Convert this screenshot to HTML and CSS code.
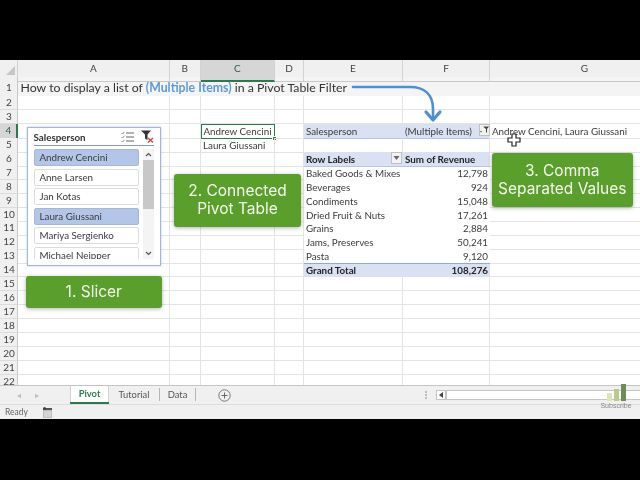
FILE: index.html
```html
<!DOCTYPE html>
<html lang="en">
<head>
<meta charset="utf-8">
<title>Pivot Table Filter</title>
<link rel="stylesheet" href="styles.css">
</head>
<body>
<main class="frame">
  <section class="sheet">
    <div class="row head">
      <div class="corner"><svg width="18" height="17" viewBox="0 0 18 17"><path d="M15 6v9H6z" fill="#c6c6c6"/></svg></div>
      <div class="ch">A</div><div class="ch">B</div><div class="ch on">C</div><div class="ch">D</div><div class="ch">E</div><div class="ch">F</div><div class="ch">G</div>
    </div>
    <div class="row title"><div class="rh">1</div><div class="tt">How to display a list of <b>(Multiple Items)</b> in a Pivot Table Filter</div></div>
    <div class="row"><div class="rh">2</div><div class="c"></div><div class="c"></div><div class="c"></div><div class="c"></div><div class="c"></div><div class="c"></div><div class="c"></div></div>
    <div class="row"><div class="rh">3</div><div class="c"></div><div class="c"></div><div class="c"></div><div class="c"></div><div class="c"></div><div class="c"></div><div class="c"></div></div>
    <div class="row"><div class="rh on">4</div><div class="c"></div><div class="c"></div><div class="c sel">Andrew Cencini<i class="handle"></i></div><div class="c"></div><div class="c band">Salesperson</div><div class="c band filt">(Multiple Items)<span class="fbtn"><svg width="9" height="7" viewBox="0 0 9 7"><path d="M3 0.5h6L7 3v3.5H6V3z" fill="#444"/><path d="M0 5h2L1 6.5z" fill="#444"/></svg></span></div><div class="c gtext">Andrew Cencini, Laura Giussani</div></div>
    <div class="row"><div class="rh">5</div><div class="c"></div><div class="c"></div><div class="c">Laura Giussani</div><div class="c"></div><div class="c"></div><div class="c"></div><div class="c"></div></div>
    <div class="row"><div class="rh">6</div><div class="c"></div><div class="c"></div><div class="c"></div><div class="c"></div><div class="c band bold lab">Row Labels<span class="drop"><svg width="7" height="4" viewBox="0 0 7 4"><path d="M0.5 0h6L3.5 4z" fill="#666"/></svg></span></div><div class="c band bold">Sum of Revenue</div><div class="c"></div></div>
    <div class="row"><div class="rh">7</div><div class="c"></div><div class="c"></div><div class="c"></div><div class="c"></div><div class="c pv">Baked Goods &amp; Mixes</div><div class="c pv num">12,798</div><div class="c"></div></div>
    <div class="row"><div class="rh">8</div><div class="c"></div><div class="c"></div><div class="c"></div><div class="c"></div><div class="c pv">Beverages</div><div class="c pv num">924</div><div class="c"></div></div>
    <div class="row"><div class="rh">9</div><div class="c"></div><div class="c"></div><div class="c"></div><div class="c"></div><div class="c pv">Condiments</div><div class="c pv num">15,048</div><div class="c"></div></div>
    <div class="row"><div class="rh">10</div><div class="c"></div><div class="c"></div><div class="c"></div><div class="c"></div><div class="c pv">Dried Fruit &amp; Nuts</div><div class="c pv num">17,261</div><div class="c"></div></div>
    <div class="row"><div class="rh">11</div><div class="c"></div><div class="c"></div><div class="c"></div><div class="c"></div><div class="c pv">Grains</div><div class="c pv num">2,884</div><div class="c"></div></div>
    <div class="row"><div class="rh">12</div><div class="c"></div><div class="c"></div><div class="c"></div><div class="c"></div><div class="c pv">Jams, Preserves</div><div class="c pv num">50,241</div><div class="c"></div></div>
    <div class="row"><div class="rh">13</div><div class="c"></div><div class="c"></div><div class="c"></div><div class="c"></div><div class="c pv">Pasta</div><div class="c pv num">9,120</div><div class="c"></div></div>
    <div class="row"><div class="rh">14</div><div class="c"></div><div class="c"></div><div class="c"></div><div class="c"></div><div class="c band bold total">Grand Total</div><div class="c band bold num total">108,276</div><div class="c"></div></div>
    <div class="row"><div class="rh">15</div><div class="c"></div><div class="c"></div><div class="c"></div><div class="c"></div><div class="c"></div><div class="c"></div><div class="c"></div></div>
    <div class="row"><div class="rh">16</div><div class="c"></div><div class="c"></div><div class="c"></div><div class="c"></div><div class="c"></div><div class="c"></div><div class="c"></div></div>
    <div class="row"><div class="rh">17</div><div class="c"></div><div class="c"></div><div class="c"></div><div class="c"></div><div class="c"></div><div class="c"></div><div class="c"></div></div>
    <div class="row"><div class="rh">18</div><div class="c"></div><div class="c"></div><div class="c"></div><div class="c"></div><div class="c"></div><div class="c"></div><div class="c"></div></div>
    <div class="row"><div class="rh">19</div><div class="c"></div><div class="c"></div><div class="c"></div><div class="c"></div><div class="c"></div><div class="c"></div><div class="c"></div></div>
    <div class="row"><div class="rh">20</div><div class="c"></div><div class="c"></div><div class="c"></div><div class="c"></div><div class="c"></div><div class="c"></div><div class="c"></div></div>
    <div class="row"><div class="rh">21</div><div class="c"></div><div class="c"></div><div class="c"></div><div class="c"></div><div class="c"></div><div class="c"></div><div class="c"></div></div>
    <div class="row"><div class="rh">22</div><div class="c"></div><div class="c"></div><div class="c"></div><div class="c"></div><div class="c"></div><div class="c"></div><div class="c"></div></div>

    <aside class="slicer">
      <header class="sl-head">
        <span class="sl-title">Salesperson</span>
        <svg class="sl-ico" width="13" height="12" viewBox="0 0 13 12"><path d="M5 2h8M5 6h8M5 10h8" stroke="#666" fill="none"/><path d="M0.5 2l1 1 2-2.2M0.5 6l1 1 2-2.2M0.5 10l1 1 2-2.2" stroke="#888" fill="none"/></svg>
        <svg class="sl-ico" width="13" height="13" viewBox="0 0 13 13"><path d="M0 0.5h10L6.5 4.5V10L4 8.5V4.5z" fill="#333"/><path d="M7 8l5 4.5M12 8l-5 4.5" stroke="#d8423a" stroke-width="1.4"/></svg>
      </header>
      <div class="sl-body">
        <div class="sl-items">
          <div class="item picked">Andrew Cencini</div>
          <div class="item">Anne Larsen</div>
          <div class="item">Jan Kotas</div>
          <div class="item picked">Laura Giussani</div>
          <div class="item">Mariya Sergienko</div>
          <div class="item">Michael Neipper</div>
        </div>
        <div class="sl-scroll">
          <svg width="11" height="11" viewBox="0 0 11 11"><path d="M3 7l2.5-2.5L8 7" stroke="#555" stroke-width="1.2" fill="none"/></svg>
          <div class="thumb"></div>
          <svg width="11" height="11" viewBox="0 0 11 11"><path d="M3 4l2.5 2.5L8 4" stroke="#555" stroke-width="1.2" fill="none"/></svg>
        </div>
      </div>
    </aside>

    <div class="note n1">1. Slicer</div>
    <div class="note n2">2. Connected<br>Pivot Table</div>
    <div class="note n3">3. Comma<br>Separated Values</div>

    <svg class="arrow" width="100" height="50" viewBox="0 0 100 50"><path d="M3 12H60C74 12 83 19 83 34V42" fill="none" stroke="#4c90d2" stroke-width="2.6" stroke-linecap="round"/><path d="M76 37L83 45L90 37" fill="none" stroke="#4c90d2" stroke-width="3.2" stroke-linecap="round" stroke-linejoin="round"/></svg>
    <svg class="cursor" width="14" height="14" viewBox="0 0 14 14"><path d="M5 1h4v4h4v4H9v4H5V9H1V5h4z" fill="#fff" stroke="#222" stroke-width="1.2"/></svg>
  </section>

  <nav class="tabbar">
    <div class="tabnav"><span>&#9666;</span><span>&#9656;</span></div>
    <div class="tab active">Pivot</div>
    <div class="tab w1">Tutorial</div>
    <div class="tab w2">Data</div>
    <svg class="plus" width="13" height="13" viewBox="0 0 13 13"><circle cx="6.5" cy="6.5" r="5.7" fill="none" stroke="#777"/><path d="M6.5 3.5v6M3.5 6.5h6" stroke="#666"/></svg>
    <div class="dots"></div>
    <div class="hscroll"><span class="hbtn"><svg width="5" height="6" viewBox="0 0 5 6"><path d="M4 0v6L0 3z" fill="#444"/></svg></span></div>
  </nav>

  <footer class="status">
    <span>Ready</span>
    <svg width="11" height="11" viewBox="0 0 11 11"><rect x="1" y="3" width="9" height="8" fill="#bbb"/><rect x="1" y="1" width="9" height="2" fill="#555"/><circle cx="2.5" cy="1.5" r="1.5" fill="#444"/><path d="M2 5h7M2 7h7M2 9h7" stroke="#eee"/></svg>
  </footer>

  <div class="sub">
    <div class="bars"><i class="b1"></i><i class="b2"></i><i class="b3"></i></div>
    <span>Subscribe</span>
  </div>
</main>
</body>
</html>
```

FILE: styles.css
```css
* { box-sizing: border-box; }
html, body { margin: 0; height: 100%; background: #000; overflow: hidden; }
body { padding: 60px 0; font-family: "Lato", "Liberation Sans", sans-serif; color: #3a3a3a; }

.frame {
  position: relative;
  width: 640px;
  height: 359px;
  background: #fff;
  display: flex;
  flex-direction: column;
  overflow: hidden;
  filter: blur(0.45px);
}

.sheet { position: relative; height: 325px; overflow: hidden; background: #fff; flex: none; }

.row {
  display: grid;
  grid-template-columns: 18px 152px 30.5px 74.5px 29px 99px 87px 190px;
  height: 13.95px;
  font-size: 9.8px;
  line-height: 14.5px;
}
.row.head { height: 17px; background: #f0f0f0; }
.row.title { height: 19px; grid-template-columns: 18px 622px; background: #f4f4f4; }

.corner { border-right: 1px solid #d0d0d0; border-bottom: 1px solid #c8c8c8; }
.ch {
  text-align: center;
  line-height: 16px;
  font-size: 10px;
  color: #444;
  border-right: 1px solid #d2d2d2;
  border-bottom: 1px solid #c8c8c8;
}
.ch.on { background: #d6d6d6; border-bottom: 2px solid #2b7a4b; color: #2f5f43; }

.rh {
  background: #f0f0f0;
  border-right: 1px solid #c8c8c8;
  border-bottom: 1px solid #dcdcdc;
  text-align: center;
  font-size: 10px;
  line-height: 13px;
  color: #444;
  padding-left: 1px;
}
.rh.on { background: #d6d6d6; border-right: 2px solid #2b7a4b; color: #2f5f43; }
.title .rh { line-height: 20px; }

.tt { font-size: 12.3px; line-height: 21px; padding-left: 2.5px; white-space: nowrap; color: #333; }
.tt b { color: #5b9bd5; font-weight: 700; }

.c {
  position: relative;
  min-width: 0;
  padding-left: 2.5px;
  white-space: nowrap;
  border-right: 1px solid #e4e4e4;
  border-bottom: 1px solid #e4e4e4;
}
.sel { border: 1px solid #2b7a4b; padding-left: 2px; line-height: 13px; }
.handle {
  position: absolute;
  right: -3px;
  bottom: -3px;
  width: 5px;
  height: 5px;
  background: #2b7a4b;
  border: 1px solid #fff;
}

.band { background: #d9e1f2; border-right: 0; border-bottom: 1px solid #b4c6e7; padding-left: 2px; }
.bold { font-weight: 700; color: #222; }
.filt { display: flex; justify-content: space-between; padding-right: 0; }
.fbtn, .drop {
  display: flex;
  align-items: center;
  justify-content: center;
  width: 11px;
  height: 12px;
  background: #f2f2f2;
  border: 1px solid #c0c0c0;
}
.lab { display: flex; justify-content: space-between; padding-right: 1px; }
.pv { border-right: 0; border-bottom: 0; padding-left: 2px; }
.num { text-align: right; padding-right: 2px; }
.total { border-top: 1px solid #8ea9db; border-bottom: 0; line-height: 13px; }
.gtext { padding-left: 2px; }

.slicer {
  position: absolute;
  left: 26.5px;
  top: 67px;
  width: 134px;
  height: 139px;
  padding: 0 6px 6px;
  background: #fff;
  border: 1px solid #a3b8d9;
  box-shadow: 0 0 2px rgba(120, 140, 180, .5);
  display: flex;
  flex-direction: column;
}
.sl-head {
  height: 18px;
  flex: none;
  display: flex;
  align-items: center;
  margin-bottom: 3px;
  border-bottom: 1px solid #7f9cc9;
  gap: 7px;
  font-size: 9.8px;
  font-weight: 700;
  color: #333;
}
.sl-title { flex: 1; }
.sl-ico { flex: none; }
.sl-body { flex: 1; min-height: 0; display: flex; gap: 4px; }
.sl-items { width: 106px; display: flex; flex-direction: column; gap: 2.5px; overflow: hidden; }
.item {
  flex: none;
  height: 17px;
  padding-left: 5px;
  border: 1px solid #dcdcdc;
  border-radius: 2px;
  font-size: 9.8px;
  line-height: 15px;
  color: #3a3a3a;
  background: #fff;
}
.item.picked { background: #b4c6e7; border-color: #a4b8dc; }
.sl-scroll { width: 11px; display: flex; flex-direction: column; background: #f4f4f4; }
.sl-scroll svg { flex: none; }
.thumb { flex: 1; margin-bottom: 39px; background: #c8c8c8; order: 0; }

.note {
  position: absolute;
  display: flex;
  align-items: center;
  justify-content: center;
  text-align: center;
  background: #5a9e2b;
  color: #f4f9ee;
  border-radius: 3px;
  box-shadow: 0 1px 4px rgba(0, 0, 0, .3);
  font-family: "Inter", "Liberation Sans", sans-serif;
  font-size: 15.5px;
  line-height: 18px;
}
.n1 { left: 25.5px; top: 216px; width: 136.5px; height: 32px; }
.n2 { left: 174px; top: 113.5px; width: 127px; height: 53.5px; }
.n3 { left: 491.5px; top: 92.5px; width: 141.5px; height: 54px; }

.arrow { position: absolute; left: 350px; top: 15px; }
.cursor { position: absolute; left: 507px; top: 73px; }

.tabbar {
  position: relative;
  flex: none;
  height: 20px;
  background: #f0f0f0;
  border-top: 1px solid #c4c4c4;
  border-bottom: 1px solid #dcdcdc;
  display: flex;
  align-items: stretch;
  font-size: 9.4px;
  color: #555;
}
.tabnav { width: 70px; display: flex; gap: 14px; padding-left: 17px; font-size: 8px; color: #bbb; line-height: 18px; }
.tab { line-height: 13px; text-align: center; border-right: 1px solid #b5b5b5; margin: 2px 0 3px; }
.tab.active {
  width: 39px;
  margin: 0;
  background: #fff;
  color: #2b7a4b;
  font-weight: 700;
  line-height: 16px;
  border-right: 0;
  border-bottom: 2px solid #2b7a4b;
  box-shadow: inset 1px 0 #d0d0d0, inset -1px 0 #d0d0d0;
}
.w1 { width: 51px; }
.w2 { width: 36px; }
.plus { margin: 3px 0 0 22px; flex: none; }
.dots { width: 2px; margin: 5px 0 5px 194px; border-left: 2px dotted #bbb; }
.hscroll { flex: 1; margin: 4px 0 4px 9px; background: #fff; border: 1px solid #c4c4c4; border-right: 0; }
.hbtn { display: flex; align-items: center; justify-content: center; width: 10px; height: 100%; border-right: 2px solid #c4c4c4; }

.status {
  flex: none;
  height: 14px;
  background: #f0f0f0;
  display: flex;
  align-items: center;
  gap: 14px;
  padding-left: 5px;
  font-size: 8.5px;
  color: #666;
}

.sub {
  position: absolute;
  left: 601px;
  top: 324px;
  width: 30px;
  display: flex;
  flex-direction: column;
  align-items: center;
  font-family: "Liberation Sans", sans-serif;
  font-size: 7px;
  color: #8a8a8a;
  white-space: nowrap;
}
.bars { height: 17px; display: flex; align-items: flex-end; gap: 2px; margin-bottom: 1px; }
.bars i { width: 5px; }
.b1 { height: 8px; background: #d8e6b8; }
.b2 { height: 12px; background: #b5cf8a; }
.b3 { height: 17px; background: #6d8c58; }
```
